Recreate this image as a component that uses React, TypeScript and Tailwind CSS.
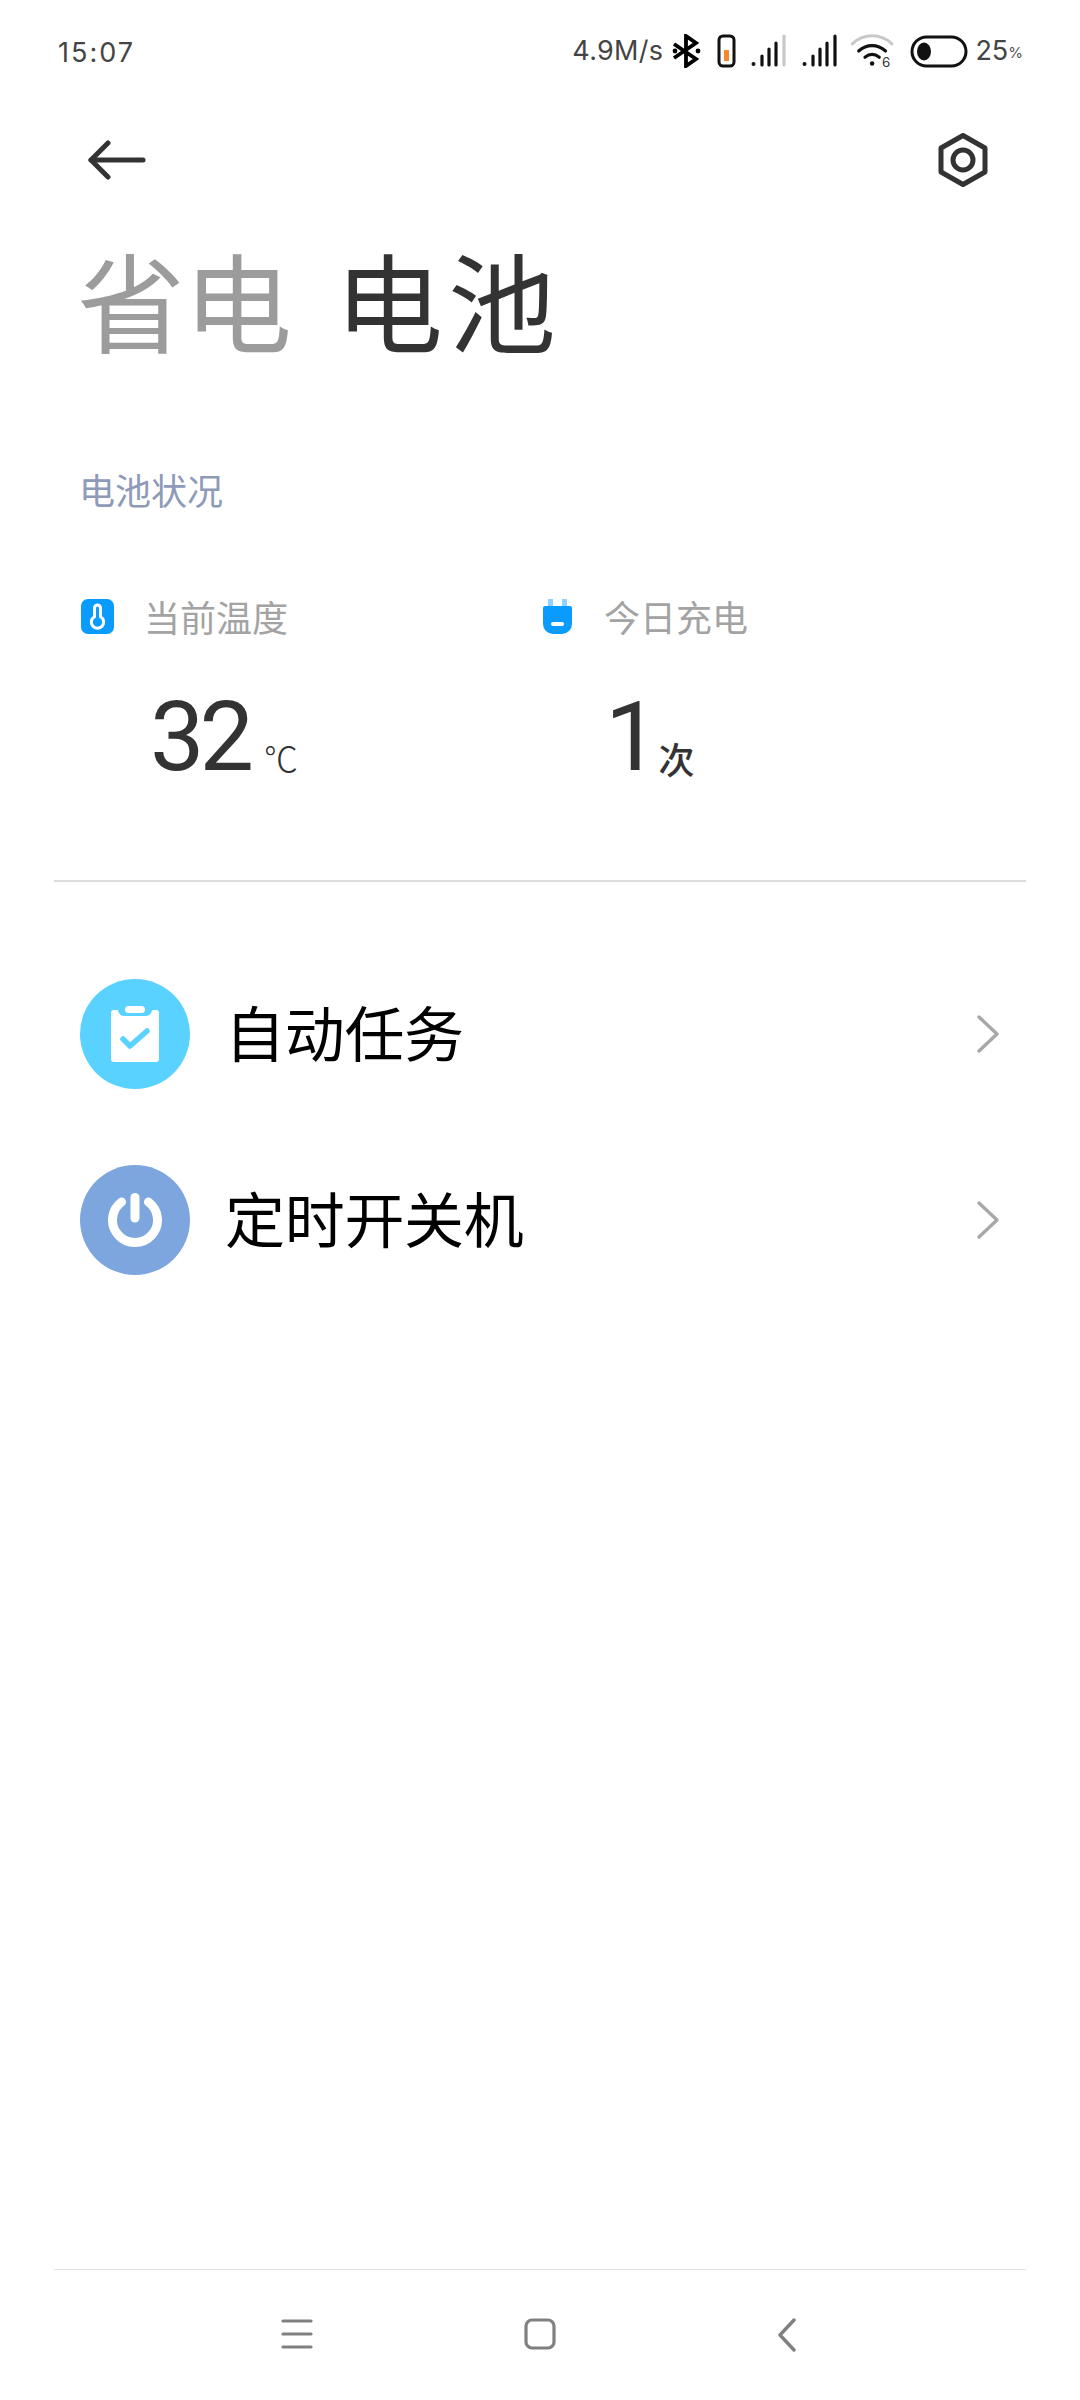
import React from "react";

const CJK = "font-['Noto_Sans_CJK_SC','Noto_Sans',sans-serif]";
const LATIN = "font-['Inter','Noto_Sans_CJK_SC',sans-serif]";
const NUM = "font-['Roboto','Noto_Sans_CJK_SC',sans-serif]";

function Signal({ last, className }: { last: string; className?: string }) {
  return (
    <svg width="36" height="34" viewBox="0 0 36 34" className={className} fill="none" strokeWidth="3.2" strokeLinecap="round">
      <circle cx="2.5" cy="30" r="2" fill="#111" />
      <path d="M11 22V31" stroke="#111" />
      <path d="M18 15V31" stroke="#111" />
      <path d="M25 9V31" stroke="#111" />
      <path d="M33 2V31" stroke={last} />
    </svg>
  );
}

function StatusBar() {
  return (
    <div className={`flex h-[70px] items-end justify-between pl-[58px] pr-[57px] ${LATIN}`}>
      <span className="whitespace-nowrap text-[27px] leading-[34px] tracking-[2px] text-[#444]">15:07</span>
      <div className="flex items-center">
        <span className="whitespace-nowrap text-[27px] leading-[34px] tracking-[0.3px] text-[#444]">4.9M/s</span>
        <svg width="30" height="34" viewBox="0 0 30 34" className="ml-[9px]" fill="none" stroke="#000" strokeWidth="3.8">
          <path d="M2 10 L24 25 L14 32 V2 L24 9 L2 24" />
          <circle cx="26" cy="17" r="2.4" fill="#000" stroke="none" />
          <circle cx="3" cy="17" r="2.4" fill="#000" stroke="none" />
        </svg>
        <svg width="20" height="34" viewBox="0 0 20 34" className="ml-[15px]" fill="none">
          <rect x="2" y="2" width="15" height="30" rx="4" stroke="#111" strokeWidth="3" />
          <rect x="7" y="16" width="5" height="11" fill="#f58a2a" />
        </svg>
        <Signal last="#c8c8c8" className="ml-[14px]" />
        <Signal last="#111" className="ml-[15px]" />
        <svg width="50" height="34" viewBox="0 0 50 38" className="ml-[10px]" fill="none" strokeLinecap="round">
          <path d="M2 11 C14 -1 34 -1 46 11" stroke="#c8c8c8" strokeWidth="3.5" />
          <path d="M9 19 C18 11 30 11 39 19" stroke="#111" strokeWidth="3.5" />
          <path d="M16 26 C21 22 27 22 32 26" stroke="#111" strokeWidth="3.5" />
          <circle cx="24" cy="33" r="2.5" fill="#111" />
          <text x="35" y="37" fontSize="15" fill="#333" fontFamily="Inter, sans-serif">6</text>
        </svg>
        <svg width="58" height="34" viewBox="0 0 58 34" className="ml-[12px]" fill="none">
          <rect x="2" y="3" width="54" height="29" rx="14.5" stroke="#111" strokeWidth="3" />
          <ellipse cx="14" cy="17.5" rx="7" ry="9" fill="#111" />
        </svg>
        <span className="ml-[7px] text-[27px] leading-[34px] text-[#444]">25</span>
        <span className="mt-[4px] text-[15px] leading-[34px] text-[#555]">%</span>
      </div>
    </div>
  );
}

function TopBar() {
  return (
    <div className="mt-[60px] flex h-[60px] items-center justify-between pl-[87px] pr-[90px]">
      <svg width="60" height="40" viewBox="0 0 60 40" fill="none" stroke="#333" strokeWidth="5" strokeLinecap="round" strokeLinejoin="round">
        <path d="M56 20H4" />
        <path d="M21 3 L4 20 L21 37" />
      </svg>
      <svg width="54" height="58" viewBox="0 0 54 58" fill="none" stroke="#333" strokeWidth="5" strokeLinejoin="round">
        <path d="M27 4.5 L49 17 V41 L27 53.5 L5 41 V17 Z" />
        <circle cx="27" cy="29" r="10" />
      </svg>
    </div>
  );
}

function Stat({
  label,
  icon,
  value,
  unit,
  labelGap,
  valueLeft,
  unitClass,
}: {
  label: string;
  icon: React.ReactNode;
  value: string;
  unit: string;
  labelGap: string;
  valueLeft: string;
  unitClass: string;
}) {
  return (
    <div className="flex flex-col">
      <div className={`flex h-[48px] items-center ${labelGap}`}>
        {icon}
        <span className={`text-[36px] leading-[48px] text-[#a3a3a3] ${CJK}`}>{label}</span>
      </div>
      <div className={`mt-[45px] flex h-[104px] items-end ${valueLeft}`}>
        <span className={`text-[97px] leading-[104px] tracking-[-5px] text-[#333] ${NUM}`}>{value}</span>
        <span className={unitClass}>{unit}</span>
      </div>
    </div>
  );
}

function Row({ icon, label, color }: { icon: React.ReactNode; label: string; color: string }) {
  return (
    <div className="flex h-[110px] items-center px-[80px]">
      <div className={`flex h-[110px] w-[110px] items-center justify-center rounded-full ${color}`}>{icon}</div>
      <span className={`ml-[35px] flex-1 pb-[7px] text-[60px] leading-[80px] tracking-[-0.3px] text-black ${CJK}`}>{label}</span>
      <svg width="24" height="40" viewBox="0 0 24 40" fill="none" stroke="#a8a8a8" strokeWidth="3.4" strokeLinecap="round" strokeLinejoin="round">
        <path d="M3 3 L21 20 L3 37" />
      </svg>
    </div>
  );
}

export default function App() {
  return (
    <div className="flex h-[2400px] w-[1080px] flex-col overflow-hidden bg-white">
      <StatusBar />
      <TopBar />
      <div className={`mt-[40px] flex h-[136px] items-center pl-[77px] text-[108px] leading-[136px] ${CJK}`}>
        <span className="font-normal tracking-[-1px] text-[#9c9c9c]">省电</span>
        <span className="ml-[44px] font-normal tracking-[5px] text-[#333]">电池</span>
      </div>
      <div className={`mt-[99px] h-[48px] pl-[79px] text-[36px] leading-[48px] text-[#8e9ab8] ${CJK}`}>电池状况</div>
      <div className="mt-[79px] flex pl-[81px]">
        <div className="w-[462px]">
          <Stat
            label="当前温度"
            labelGap="gap-[30px]"
            valueLeft="pl-[69px]"
            value="32"
            unit="℃"
            unitClass={`ml-[15px] mb-[6px] text-[34px] leading-[50px] font-light text-[#333] ${CJK}`}
            icon={
              <svg width="33" height="35" viewBox="0 0 33 35">
                <rect width="33" height="35" rx="7" fill="#0a9bff" />
                <path d="M13.5 9 a3 3 0 0 1 6 0 V17.7 a6.2 6.2 0 1 1 -6 0 Z" fill="none" stroke="#fff" strokeWidth="3" />
              </svg>
            }
          />
        </div>
        <div>
          <Stat
            label="今日充电"
            labelGap="gap-[32px]"
            valueLeft="pl-[62px]"
            value="1"
            unit="次"
            unitClass={`ml-[4px] mb-[6px] text-[36px] leading-[50px] font-medium text-[#333] ${CJK}`}
            icon={
              <svg width="29" height="35" viewBox="0 0 29 35">
                <rect x="5" y="0" width="5" height="9" fill="#8ed2ff" />
                <rect x="19" y="0" width="5" height="9" fill="#8ed2ff" />
                <path d="M2 7 H27 a2 2 0 0 1 2 2 V25 a10 10 0 0 1 -10 10 H10 a10 10 0 0 1 -10 -10 V9 a2 2 0 0 1 2 -2 Z" fill="#0a9bff" />
                <rect x="8" y="23" width="13" height="4" rx="2" fill="#fff" />
              </svg>
            }
          />
        </div>
      </div>
      <div className="mx-[54px] mt-[91px] h-[2px] bg-[#dddddd]" />
      <div className="mt-[97px] flex flex-col gap-[76px]">
        <Row
          color="bg-[#5ad2ff]"
          label="自动任务"
          icon={
            <svg width="48" height="56" viewBox="0 0 48 56">
              <path d="M3 4 H7 a6 6 0 0 0 6 6 H35 a6 6 0 0 0 6 -6 H45 a3 3 0 0 1 3 3 V53 a3 3 0 0 1 -3 3 H3 a3 3 0 0 1 -3 -3 V7 a3 3 0 0 1 3 -3 Z" fill="#fff" />
              <rect x="14" y="0" width="20" height="7" rx="3.5" fill="#fff" />
              <path d="M12 33 L19 40 L36 25" fill="none" stroke="#5ad2ff" strokeWidth="5.5" strokeLinecap="round" strokeLinejoin="round" />
            </svg>
          }
        />
        <Row
          color="bg-[#7ea6de]"
          label="定时开关机"
          icon={
            <svg width="54" height="54" viewBox="0 0 54 54" fill="none" stroke="#fff" strokeLinecap="round" strokeWidth="9">
              <path d="M13.5 9 A22.5 22.5 0 1 0 40.5 9" />
              <path d="M27 4.5V25" />
            </svg>
          }
        />
      </div>
      <div className="flex-1" />
      <div className="mx-[54px] h-[1px] bg-[#e2e2e2]" />
      <div className="flex h-[130px] items-start pl-[280px] pt-[48px]">
        <svg width="34" height="32" viewBox="0 0 34 32" stroke="#808080" strokeWidth="3.2" strokeLinecap="round">
          <path d="M3 3H31M3 16H31M3 29H31" />
        </svg>
        <svg width="32" height="32" viewBox="0 0 32 32" className="ml-[210px]" fill="none" stroke="#808080" strokeWidth="3.2">
          <rect x="2" y="2" width="28" height="28" rx="6" />
        </svg>
        <svg width="20" height="34" viewBox="0 0 20 34" className="ml-[221px]" fill="none" stroke="#808080" strokeWidth="3.4" strokeLinecap="round" strokeLinejoin="round">
          <path d="M17 2 L3 17 L17 32" />
        </svg>
      </div>
    </div>
  );
}
